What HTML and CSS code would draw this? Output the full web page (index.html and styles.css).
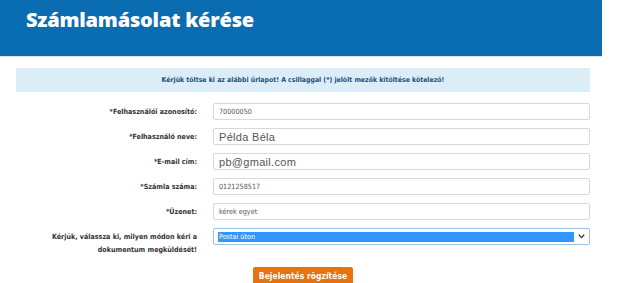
FILE: index.html
```html
<!DOCTYPE html>
<html lang="hu">
<head>
  <meta charset="UTF-8">
  <meta name="viewport" content="width=device-width, initial-scale=1.0">
  <title>Számlamásolat kérése</title>
  <link rel="stylesheet" href="styles.css">
</head>
<body>
  <div class="page_header">
    <h1>Számlamásolat kérése</h1>
  </div>
  <div class="content">
    <div class="notice">Kérjük töltse ki az alábbi űrlapot! A csillaggal (*) jelölt mezők kitöltése kötelező!</div>
    <form class="request_form">
      <div class="row">
        <label>*Felhasználói azonosító:</label>
        <div class="field small">70000050</div>
      </div>
      <div class="row">
        <label>*Felhasználó neve:</label>
        <div class="field big">Példa Béla</div>
      </div>
      <div class="row">
        <label>*E-mail cím:</label>
        <div class="field big">pb@gmail.com</div>
      </div>
      <div class="row">
        <label>*Számla száma:</label>
        <div class="field small">0121258517</div>
      </div>
      <div class="row">
        <label>*Üzenet:</label>
        <div class="field small">kérek egyet</div>
      </div>
      <div class="row top">
        <label class="two_lines">Kérjük, válassza ki, milyen módon kéri a<br>dokumentum megküldését!</label>
        <div class="field select_box">
          <span class="selected">Postai úton</span>
          <svg class="chevron" width="7" height="5" viewBox="0 0 7 5"><path d="M0.8 0.8 L3.5 3.6 L6.2 0.8" fill="none" stroke="#333" stroke-width="1.3"/></svg>
        </div>
      </div>
      <div class="actions">
        <button type="button" class="submit_btn">Bejelentés rögzítése</button>
      </div>
    </form>
  </div>
</body>
</html>
```

FILE: styles.css
```css
*{
  margin: 0;
  padding: 0;
  box-sizing: border-box;
}
body{
  background: #fff;
  font-family: "DejaVu Sans Condensed", "DejaVu Sans", sans-serif;
}
.page_header{
  width: 602px;
  height: 57px;
  background-color: #0a6cb1;
  border-bottom: 1px solid #d6e7f2;
  padding: 7px 0 0 26px;
}
.page_header h1{
  color: #fff;
  font-family: "Open Sans", sans-serif;
  font-weight: 800;
  font-size: 20px;
  line-height: 26px;
  letter-spacing: -0.2px;
}
.content{
  width: 574px;
  margin-left: 16px;
  padding-top: 11px;
}
.notice{
  height: 24px;
  background-color: #dbedf7;
  color: #1d4f7c;
  font-size: 6.9px;
  font-weight: bold;
  line-height: 24px;
  text-align: center;
}
.request_form{
  margin-top: 11px;
  display: flex;
  flex-direction: column;
  gap: 8px;
}
.row{
  display: grid;
  grid-template-columns: 181px 377px;
  column-gap: 16px;
  align-items: center;
}
.row.top{
  align-items: start;
}
.row label{
  text-align: right;
  font-size: 7.1px;
  font-weight: bold;
  color: #333;
}
.row label.two_lines{
  line-height: 13px;
  margin-top: 2px;
}
.field{
  height: 17px;
  border: 1px solid #d9d9d9;
  border-radius: 2px;
  padding-left: 5px;
  color: #444;
  display: flex;
  align-items: center;
  background: #fff;
}
.field.small{
  font-size: 7.2px;
  color: #555;
}
.field.big{
  font-family: "Liberation Sans", Arial, sans-serif;
  font-size: 11px;
  letter-spacing: 0.3px;
  color: #555;
}
.select_box{
  border-color: #9cc3e6;
  padding: 0 4px 0 4px;
  gap: 4px;
}
.select_box .selected{
  flex: 1;
  height: 10px;
  background-color: #3297fd;
  color: #fff;
  font-size: 7.2px;
  line-height: 10px;
  padding-left: 1px;
}
.actions{
  display: flex;
  justify-content: center;
  margin-top: 3px;
}
.submit_btn{
  width: 100px;
  height: 18px;
  background-color: #e8720c;
  border: none;
  border-radius: 2px;
  color: #fff;
  font-family: "DejaVu Sans Condensed", "DejaVu Sans", sans-serif;
  font-size: 8.5px;
  font-weight: bold;
}
```
